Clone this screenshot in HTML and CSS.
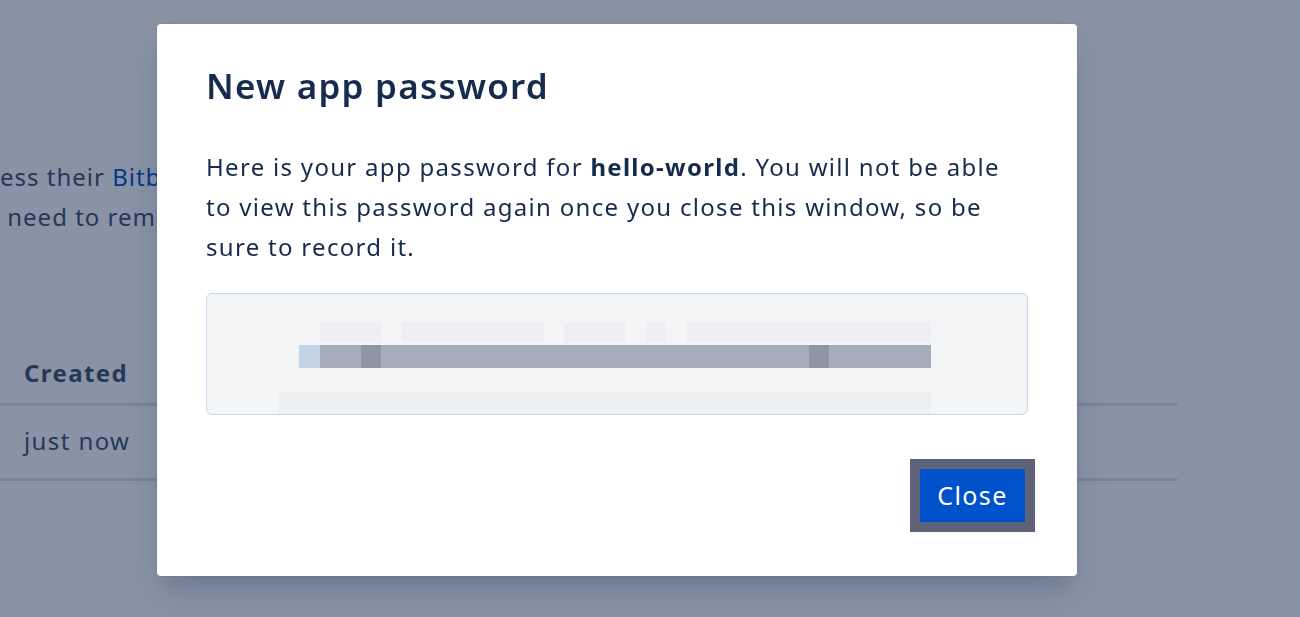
FILE: index.html
```html
<!DOCTYPE html>
<html lang="en">
<head>
<meta charset="utf-8">
<title>New app password</title>
<link rel="stylesheet" href="styles.css">
</head>
<body>
<main class="page">
  <p class="intro">
    <span class="intro-line">ess their <a class="link" href="#">Bitbucket</a> account through apps and services,</span>
    <span class="intro-line">&nbsp;need to remember it afterwards.</span>
  </p>
  <table class="passwords">
    <thead>
      <tr><th>Created</th></tr>
    </thead>
    <tbody>
      <tr><td>just now</td></tr>
    </tbody>
  </table>
</main>

<div class="blanket">
  <section class="modal" role="dialog" aria-labelledby="modal-title">
    <h1 class="modal-title" id="modal-title">New app password</h1>
    <p class="modal-text">Here is your app password for <strong>hello-world</strong>. You will not be able to view this password again once you close this window, so be sure to record it.</p>
    <div class="secret" aria-label="App password (redacted)">
      <svg class="secret-img" width="822" height="121" viewBox="0 0 822 121">
        <rect x="114" y="29" width="61" height="21" fill="#eeeff2"/>
        <rect x="195" y="29" width="143" height="21" fill="#eeeff2"/>
        <rect x="358" y="29" width="61" height="21" fill="#eeeff2"/>
        <rect x="440" y="29" width="20" height="21" fill="#eeeff2"/>
        <rect x="481" y="29" width="244" height="21" fill="#eeeff2"/>
        <rect x="93" y="52" width="21" height="23" fill="#c3d4e6"/>
        <rect x="114" y="52" width="611" height="23" fill="#a7aebb"/>
        <rect x="155" y="52" width="20" height="23" fill="#8e96a6"/>
        <rect x="603" y="52" width="20" height="23" fill="#8e96a6"/>
        <rect x="73" y="99" width="652" height="22" fill="#eeeff1"/>
      </svg>
    </div>
    <footer class="modal-footer">
      <button class="btn-primary" type="button">Close</button>
    </footer>
  </section>
</div>
</body>
</html>
```

FILE: styles.css
```css
* { box-sizing: border-box; }

html, body {
  margin: 0;
  padding: 0;
  background: #ffffff;
  font-family: "Noto Sans", "Open Sans", "DejaVu Sans", sans-serif;
  color: #172b4d;
  overflow: hidden;
  height: 617px;
}

.page {
  width: 1177px;
}

.intro {
  margin: 157px 0 0 0;
  font-size: 24px;
  line-height: 40px;
  letter-spacing: 1px;
  color: #42526e;
}

.intro-line {
  display: block;
  white-space: nowrap;
}

.link {
  color: #0052cc;
  text-decoration: none;
}

.passwords {
  margin-top: 106px;
  width: 1177px;
  border-collapse: collapse;
  font-size: 24px;
  letter-spacing: 1.4px;
  color: #42526e;
}

.passwords th {
  text-align: left;
  font-weight: 700;
  padding: 12px 24px;
  line-height: 36px;
  border-bottom: 3px solid #dfe1e6;
}

.passwords td {
  padding: 17px 24px 19px;
  line-height: 36px;
  border-bottom: 3px solid #dfe1e6;
}

.blanket {
  position: fixed;
  inset: 0;
  background: rgba(9, 30, 66, 0.48);
  display: flex;
  align-items: flex-start;
  padding: 24px 0 0 157px;
}

.modal {
  width: 920px;
  height: 552px;
  background: #ffffff;
  border-radius: 4px;
  box-shadow: 0 0 0 1px rgba(9, 30, 66, 0.06), 0 18px 30px -6px rgba(9, 30, 66, 0.25);
  padding: 40px 49px 0 49px;
  display: flex;
  flex-direction: column;
}

.modal-title {
  margin: 0;
  font-size: 35px;
  line-height: 44px;
  font-weight: 600;
  letter-spacing: 1.25px;
  color: #172b4d;
}

.modal-text {
  margin: 39px 0 0 0;
  font-size: 24px;
  line-height: 40px;
  letter-spacing: 1.3px;
  color: #172b4d;
}

.modal-text strong {
  font-weight: 700;
}

.secret {
  margin-top: 26px;
  height: 122px;
  background: #f4f5f7;
  border: 1px solid #c6d6e8;
  border-radius: 6px;
  overflow: hidden;
}

.secret-img {
  display: block;
  margin: -1px 0 0 -1px;
}

.modal-footer {
  display: flex;
  justify-content: flex-end;
  margin-top: 54px;
  padding-right: 3px;
}

.btn-primary {
  background: #0052cc;
  color: #ffffff;
  border: none;
  border-radius: 0;
  font-family: inherit;
  font-size: 25px;
  line-height: 33px;
  letter-spacing: 1.4px;
  padding: 10px 0;
  width: 105px;
  height: 53px;
  outline: 10px solid #5e6377;
  cursor: pointer;
}
```
